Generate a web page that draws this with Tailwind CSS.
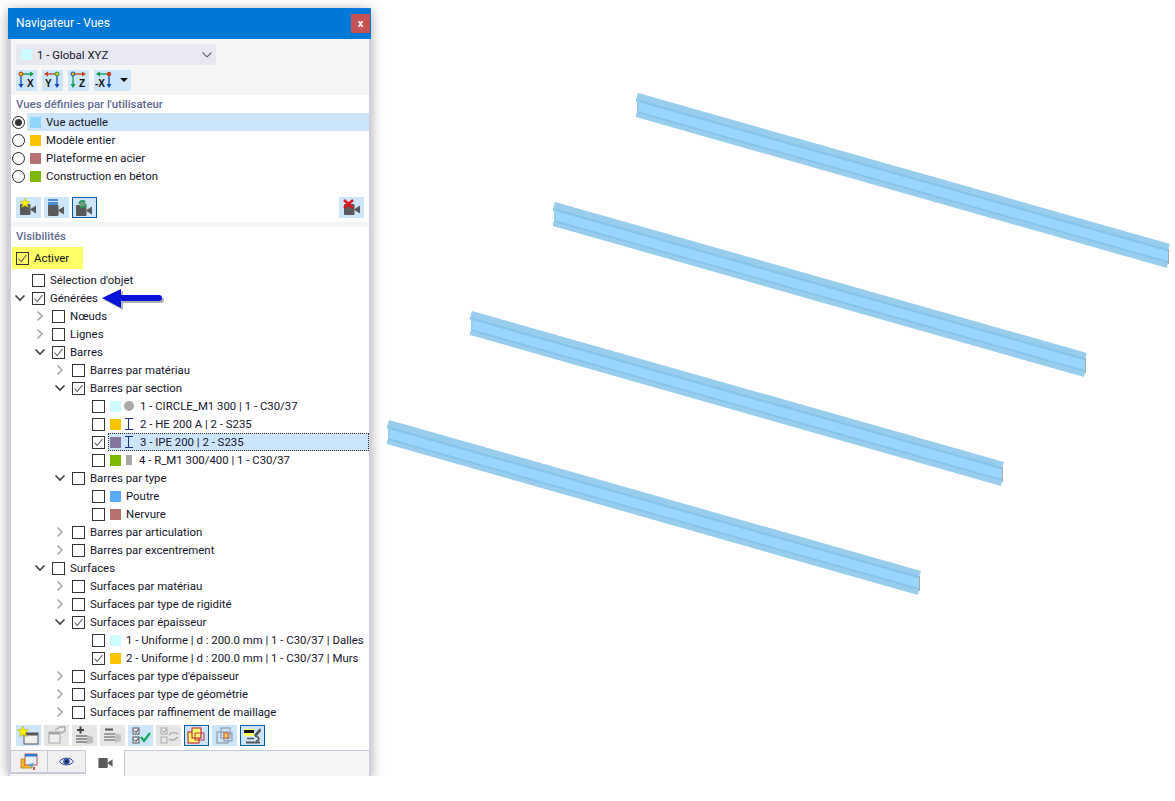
<!DOCTYPE html>
<html lang="fr">
<head>
<meta charset="utf-8">
<title>Navigateur - Vues</title>
<script src="https://cdn.jsdelivr.net/npm/@tailwindcss/browser@4"></script>
</head>
<body class="bg-white">
<svg width="0" height="0" class="absolute">
  <defs>
    <symbol id="ck" viewBox="0 0 13 13"><path d="M2.5 6.5 L5.2 9.5 L10.5 3" fill="none" stroke="#555" stroke-width="1.1"/></symbol>
    <symbol id="open" viewBox="0 0 12 12"><path d="M1.5 3.5 L6 8 L10.5 3.5" fill="none" stroke="#444" stroke-width="1.7"/></symbol>
    <symbol id="closed" viewBox="0 0 12 12"><path d="M3.5 1.5 L8 6 L3.5 10.5" fill="none" stroke="#aaa" stroke-width="1.7"/></symbol>
    <symbol id="ibeam" viewBox="0 0 10 12"><path d="M1 .5 H9 M4.500 .5 V11.500 M1 11.500 H9" fill="none" stroke="#1c2f8f" stroke-width="1"/></symbol>
    <symbol id="cam" viewBox="0 0 16 11"><rect x="0" y="0" width="10.5" height="11" rx="1" fill="#5a5a5a"/><path d="M10.5 5 L16 1.5 V9.5 L10.5 6 Z" fill="#5a5a5a"/></symbol>
    <g id="beam">
      <polygon points="638,93 1170,244 1168,250 636,100" fill="#98cdee"/>
      <polygon points="637,101 1168,251 1168,263 637,113" fill="#9ad6fd"/>
      <polygon points="636,99 1168,249 1168,251.500 636,101.500" fill="#86c4ea"/>
      <polygon points="637,111 1168,261 1168,263.500 637,113.500" fill="#86c4ea"/>
      <polygon points="636,113 1168,263 1167,268 636,117" fill="#98cdee"/>
      <polygon points="637,100 639,101 639,111 637,112" fill="#98cdee"/>
      <polygon points="1168,249 1169,249 1169,264 1168,264" fill="#a8a8a0"/>
    </g>
  </defs>
</svg>

<svg class="absolute left-0 top-0" width="1175" height="801" viewBox="0 0 1175 801">
  <use href="#beam"/>
  <use href="#beam" transform="translate(-83 109)"/>
  <use href="#beam" transform="translate(-166 218)"/>
  <use href="#beam" transform="translate(-249 327)"/>
</svg>

<div class="relative ml-[8px] mt-[8px] w-[363px] h-[768px] shadow-[0_2px_12px_rgba(0,0,0,0.35)] flex flex-col bg-white border-l-[3px] border-r-[2px] border-b-[1px] border-[#d0d0dc] text-[11.4px] leading-[19px] text-[#14142b] [font-family:Roboto,sans-serif]">
  <!-- title -->
  <div class="-ml-[3px] -mr-[2px] h-[31px] shrink-0 bg-[#0078d7] flex items-center justify-between pl-[8px] pr-[1px] text-white text-[12px]">
    <span>Navigateur - Vues</span>
    <span class="w-[19px] h-[19px] bg-[#c75050] flex items-center justify-center text-[11px] font-bold leading-none">x</span>
  </div>

  <!-- top toolbar -->
  <div class="h-[56px] shrink-0 bg-[#f5f5f5] pl-[5px] pt-[5px]">
    <div class="w-[200px] h-[21px] bg-[#e8e8f0] flex items-center pl-[5px]">
      <span class="w-[11px] h-[11px] bg-[#ccfdff] shrink-0"></span>
      <span class="ml-[5px] flex-1 mt-[1px]">1 - Global XYZ</span>
      <svg class="mr-[3px]" width="12" height="12" viewBox="0 0 12 12"><path d="M1.5 3.5 L6 8 L10.5 3.5" fill="none" stroke="#666" stroke-width="1.1"/></svg>
    </div>
    <div class="flex gap-[5px] mt-[5px]">
      <span class="w-[21px] h-[21px] bg-[#cce5f8] block">
        <svg width="21" height="21" viewBox="0 0 21 21"><path d="M5 4 V16" stroke="#1048b8" stroke-width="1.3"/><path d="M2.5 14 H7.5 L5 18 Z" fill="#1048b8"/><path d="M5 4 H15" stroke="#0d9a4c" stroke-width="1.3"/><path d="M14 1.5 V6.5 L18 4 Z" fill="#0d9a4c"/><circle cx="5" cy="4" r="2" fill="#e8c800" stroke="#c8301c"/><text x="11" y="17" font-size="10" font-weight="700" font-family="Liberation Sans" fill="#111">X</text></svg>
      </span>
      <span class="w-[21px] h-[21px] bg-[#cce5f8] block">
        <svg width="21" height="21" viewBox="0 0 21 21"><path d="M15 4 V16" stroke="#1048b8" stroke-width="1.3"/><path d="M12.500 14 H17.500 L15 18 Z" fill="#1048b8"/><path d="M5 4 H15" stroke="#c8401c" stroke-width="1.3"/><path d="M6 1.500 V6.500 L2 4 Z" fill="#c8401c"/><circle cx="15" cy="4" r="2" fill="#e8c800" stroke="#0d9a4c"/><text x="3" y="17" font-size="10" font-weight="700" font-family="Liberation Sans" fill="#111">Y</text></svg>
      </span>
      <span class="w-[21px] h-[21px] bg-[#cce5f8] block">
        <svg width="21" height="21" viewBox="0 0 21 21"><path d="M5 4 V16" stroke="#0d9a4c" stroke-width="1.3"/><path d="M2.500 14 H7.500 L5 18 Z" fill="#0d9a4c"/><path d="M5 4 H15" stroke="#c8401c" stroke-width="1.3"/><path d="M14 1.500 V6.500 L18 4 Z" fill="#c8401c"/><circle cx="5" cy="4" r="2" fill="#e8c800" stroke="#1048b8"/><text x="11" y="17" font-size="10" font-weight="700" font-family="Liberation Sans" fill="#111">Z</text></svg>
      </span>
      <span class="w-[37px] h-[21px] bg-[#cce5f8] block">
        <svg width="37" height="21" viewBox="0 0 37 21"><path d="M15 4 V16" stroke="#1048b8" stroke-width="1.3"/><path d="M12.500 14 H17.500 L15 18 Z" fill="#1048b8"/><path d="M5 4 H15" stroke="#0d9a4c" stroke-width="1.3"/><path d="M6 1.500 V6.500 L2 4 Z" fill="#0d9a4c"/><circle cx="15" cy="4" r="2.200" fill="#c8401c"/><text x="1" y="17" font-size="10" font-weight="700" font-family="Liberation Sans" fill="#111">-X</text><path d="M26 8 H34 L30 12 Z" fill="#111"/></svg>
      </span>
    </div>
  </div>

  <div class="shrink-0 h-[18px] pl-[5px] flex items-center font-medium text-[#5f6b91]">Vues définies par l'utilisateur</div>

  <!-- view list -->
  <div class="shrink-0 flex items-center h-[18px]">
    <span class="ml-[1px] w-[13px] h-[13px] rounded-full border border-[#222] flex items-center justify-center"><span class="w-[7px] h-[7px] rounded-full bg-[#333]"></span></span>
    <span class="ml-[2px] flex-1 h-full bg-[#cce5fb] flex items-center pl-[3px]"><span class="w-[11px] h-[11px] bg-[#90d6f8]"></span><span class="ml-[5px]">Vue actuelle</span></span>
  </div>
  <div class="shrink-0 flex items-center h-[18px]">
    <span class="ml-[1px] w-[13px] h-[13px] rounded-full border border-[#222]"></span>
    <span class="ml-[2px] flex-1 h-full flex items-center pl-[3px]"><span class="w-[11px] h-[11px] bg-[#f8c500]"></span><span class="ml-[5px]">Modèle entier</span></span>
  </div>
  <div class="shrink-0 flex items-center h-[18px]">
    <span class="ml-[1px] w-[13px] h-[13px] rounded-full border border-[#222]"></span>
    <span class="ml-[2px] flex-1 h-full flex items-center pl-[3px]"><span class="w-[11px] h-[11px] bg-[#b87070]"></span><span class="ml-[5px]">Plateforme en acier</span></span>
  </div>
  <div class="shrink-0 flex items-center h-[18px]">
    <span class="ml-[1px] w-[13px] h-[13px] rounded-full border border-[#222]"></span>
    <span class="ml-[2px] flex-1 h-full flex items-center pl-[3px]"><span class="w-[11px] h-[11px] bg-[#7db900]"></span><span class="ml-[5px]">Construction en béton</span></span>
  </div>

  <!-- camera toolbar -->
  <div class="shrink-0 flex gap-[3px] pl-[5px] pr-[5px] mt-[12px] h-[21px]">
    <span class="relative w-[25px] h-[21px] bg-[#cce5f8] block">
      <svg class="absolute left-[4px] top-[7px]" width="16" height="11"><use href="#cam"/></svg>
      <svg class="absolute left-[4px] top-[1px]" width="10" height="10" viewBox="0 0 12 12"><path d="M6 0 L7.500 4 L12 4.500 L8.500 7 L10 11.500 L6 9 L2 11.500 L3.500 7 L0 4.500 L4.500 4 Z" fill="#f5f000" stroke="#b8a000" stroke-width=".5"/></svg>
    </span>
    <span class="relative w-[25px] h-[21px] bg-[#cce5f8] block">
      <svg class="absolute left-[4px] top-[8px]" width="16" height="11"><use href="#cam"/></svg>
      <span class="absolute left-[4px] top-[2px] w-[10px] h-[2px] bg-[#4f8fd0]"></span>
      <span class="absolute left-[4px] top-[5px] w-[10px] h-[3px] bg-[#4f8fd0]"></span>
    </span>
    <span class="relative w-[25px] h-[21px] bg-[#cce5f8] border border-[#005a9e] block">
      <svg class="absolute left-[3px] top-[7px]" width="16" height="11"><use href="#cam"/></svg>
      <svg class="absolute left-[4px] top-[1px]" width="11" height="10" viewBox="0 0 12 11"><circle cx="6" cy="5.500" r="3.500" fill="#7f9a8a" stroke="#1f9a58" stroke-width="2" stroke-dasharray="8 3"/></svg>
    </span>
    <span class="flex-1"></span>
    <span class="relative w-[25px] h-[21px] bg-[#cce5f8] block">
      <svg class="absolute left-[5px] top-[7px]" width="16" height="11"><use href="#cam"/></svg>
      <svg class="absolute left-[4px] top-[2px]" width="11" height="10" viewBox="0 0 11 10"><path d="M1 1 L10 9 M10 1 L1 9" stroke="#e0141c" stroke-width="2.400"/></svg>
    </span>
  </div>

  <div class="shrink-0 h-[5px] mt-[4px] bg-[#f5f5f5]"></div>

  <div class="shrink-0 h-[18px] pl-[5px] flex items-center font-medium text-[#5f6b91]">Visibilités</div>

  <!-- Activer -->
  <div class="shrink-0 mt-[2px] ml-[1px] w-[71px] h-[22px] bg-[#ffff66] flex items-center pl-[4px]">
    <span class="w-[13px] h-[13px] border border-[#333] block"><svg class="-m-px" width="13" height="13"><use href="#ck"/></svg></span>
    <span class="ml-[5px]">Activer</span>
  </div>

  <!-- tree -->
  <div class="shrink-0 mt-[2px] flex flex-col relative">
    <div class="h-[18px] flex items-center pl-[21px]"><span class="w-[13px] h-[13px] border border-[#333]"></span><span class="ml-[5px]">Sélection d'objet</span></div>
    <div class="h-[18px] flex items-center pl-[3px]"><svg class="mr-[6px]" width="12" height="12"><use href="#open"/></svg><span class="w-[13px] h-[13px] border border-[#333] block"><svg class="-m-px" width="13" height="13"><use href="#ck"/></svg></span><span class="ml-[5px]">Générées</span></div>
    <div class="h-[18px] flex items-center pl-[23px]"><svg class="mr-[6px]" width="12" height="12"><use href="#closed"/></svg><span class="w-[13px] h-[13px] border border-[#333]"></span><span class="ml-[5px]">Nœuds</span></div>
    <div class="h-[18px] flex items-center pl-[23px]"><svg class="mr-[6px]" width="12" height="12"><use href="#closed"/></svg><span class="w-[13px] h-[13px] border border-[#333]"></span><span class="ml-[5px]">Lignes</span></div>
    <div class="h-[18px] flex items-center pl-[23px]"><svg class="mr-[6px]" width="12" height="12"><use href="#open"/></svg><span class="w-[13px] h-[13px] border border-[#333] block"><svg class="-m-px" width="13" height="13"><use href="#ck"/></svg></span><span class="ml-[5px]">Barres</span></div>
    <div class="h-[18px] flex items-center pl-[43px]"><svg class="mr-[6px]" width="12" height="12"><use href="#closed"/></svg><span class="w-[13px] h-[13px] border border-[#333]"></span><span class="ml-[5px]">Barres par matériau</span></div>
    <div class="h-[18px] flex items-center pl-[43px]"><svg class="mr-[6px]" width="12" height="12"><use href="#open"/></svg><span class="w-[13px] h-[13px] border border-[#333] block"><svg class="-m-px" width="13" height="13"><use href="#ck"/></svg></span><span class="ml-[5px]">Barres par section</span></div>
    <div class="h-[18px] flex items-center pl-[81px]"><span class="w-[13px] h-[13px] border border-[#333]"></span><span class="ml-[5px] w-[11px] h-[11px] bg-[#ccfdff]"></span><span class="ml-[3px] w-[10px] h-[10px] rounded-full bg-[#a8a8a8]"></span><span class="ml-[6px]">1 - CIRCLE_M1 300 | 1 - C30/37</span></div>
    <div class="h-[18px] flex items-center pl-[81px]"><span class="w-[13px] h-[13px] border border-[#333]"></span><span class="ml-[5px] w-[11px] h-[11px] bg-[#f8c500]"></span><svg class="ml-[3px] mr-[6px]" width="10" height="12"><use href="#ibeam"/></svg><span>2 - HE 200 A | 2 - S235</span></div>
    <div class="h-[18px] flex items-center pl-[81px]"><span class="w-[13px] h-[13px] border border-[#333] block"><svg class="-m-px" width="13" height="13"><use href="#ck"/></svg></span><span class="ml-[3px] flex-1 h-full flex items-center pl-[1px] bg-[#cce5fb] border border-dotted border-[#333]"><span class="w-[11px] h-[11px] bg-[#85759a]"></span><svg class="ml-[3px] mr-[6px]" width="10" height="12"><use href="#ibeam"/></svg><span>3 - IPE 200 | 2 - S235</span></span></div>
    <div class="h-[18px] flex items-center pl-[81px]"><span class="w-[13px] h-[13px] border border-[#333]"></span><span class="ml-[5px] w-[11px] h-[11px] bg-[#7db900]"></span><span class="ml-[5px] w-[6px] h-[10px] bg-[#a8a8a8]"></span><span class="ml-[7px]">4 - R_M1 300/400 | 1 - C30/37</span></div>
    <div class="h-[18px] flex items-center pl-[43px]"><svg class="mr-[6px]" width="12" height="12"><use href="#open"/></svg><span class="w-[13px] h-[13px] border border-[#333]"></span><span class="ml-[5px]">Barres par type</span></div>
    <div class="h-[18px] flex items-center pl-[81px]"><span class="w-[13px] h-[13px] border border-[#333]"></span><span class="ml-[5px] w-[11px] h-[11px] bg-[#5aa9f5]"></span><span class="ml-[5px]">Poutre</span></div>
    <div class="h-[18px] flex items-center pl-[81px]"><span class="w-[13px] h-[13px] border border-[#333]"></span><span class="ml-[5px] w-[11px] h-[11px] bg-[#b87070]"></span><span class="ml-[5px]">Nervure</span></div>
    <div class="h-[18px] flex items-center pl-[43px]"><svg class="mr-[6px]" width="12" height="12"><use href="#closed"/></svg><span class="w-[13px] h-[13px] border border-[#333]"></span><span class="ml-[5px]">Barres par articulation</span></div>
    <div class="h-[18px] flex items-center pl-[43px]"><svg class="mr-[6px]" width="12" height="12"><use href="#closed"/></svg><span class="w-[13px] h-[13px] border border-[#333]"></span><span class="ml-[5px]">Barres par excentrement</span></div>
    <div class="h-[18px] flex items-center pl-[23px]"><svg class="mr-[6px]" width="12" height="12"><use href="#open"/></svg><span class="w-[13px] h-[13px] border border-[#333]"></span><span class="ml-[5px]">Surfaces</span></div>
    <div class="h-[18px] flex items-center pl-[43px]"><svg class="mr-[6px]" width="12" height="12"><use href="#closed"/></svg><span class="w-[13px] h-[13px] border border-[#333]"></span><span class="ml-[5px]">Surfaces par matériau</span></div>
    <div class="h-[18px] flex items-center pl-[43px]"><svg class="mr-[6px]" width="12" height="12"><use href="#closed"/></svg><span class="w-[13px] h-[13px] border border-[#333]"></span><span class="ml-[5px]">Surfaces par type de rigidité</span></div>
    <div class="h-[18px] flex items-center pl-[43px]"><svg class="mr-[6px]" width="12" height="12"><use href="#open"/></svg><span class="w-[13px] h-[13px] border border-[#333] block"><svg class="-m-px" width="13" height="13"><use href="#ck"/></svg></span><span class="ml-[5px]">Surfaces par épaisseur</span></div>
    <div class="h-[18px] flex items-center pl-[81px]"><span class="w-[13px] h-[13px] border border-[#333] shrink-0"></span><span class="ml-[5px] w-[11px] h-[11px] bg-[#ccfdff] shrink-0"></span><span class="ml-[5px] whitespace-nowrap">1 - Uniforme | d : 200.0 mm | 1 - C30/37 | Dalles</span></div>
    <div class="h-[18px] flex items-center pl-[81px]"><span class="w-[13px] h-[13px] border border-[#333] block shrink-0"><svg class="-m-px" width="13" height="13"><use href="#ck"/></svg></span><span class="ml-[5px] w-[11px] h-[11px] bg-[#f8c500] shrink-0"></span><span class="ml-[5px] whitespace-nowrap">2 - Uniforme | d : 200.0 mm | 1 - C30/37 | Murs</span></div>
    <div class="h-[18px] flex items-center pl-[43px]"><svg class="mr-[6px]" width="12" height="12"><use href="#closed"/></svg><span class="w-[13px] h-[13px] border border-[#333]"></span><span class="ml-[5px]">Surfaces par type d'épaisseur</span></div>
    <div class="h-[18px] flex items-center pl-[43px]"><svg class="mr-[6px]" width="12" height="12"><use href="#closed"/></svg><span class="w-[13px] h-[13px] border border-[#333]"></span><span class="ml-[5px]">Surfaces par type de géométrie</span></div>
    <div class="h-[18px] flex items-center pl-[43px]"><svg class="mr-[6px]" width="12" height="12"><use href="#closed"/></svg><span class="w-[13px] h-[13px] border border-[#333]"></span><span class="ml-[5px]">Surfaces par raffinement de maillage</span></div>
  </div>

  <!-- bottom toolbar -->
  <div class="shrink-0 mt-[4px] h-[21px] pl-[5px] flex gap-[3px]">
    <span class="block w-[25px] h-[21px] bg-[#cce5f8]"><svg width="25" height="21" viewBox="0 0 25 21"><rect x="8" y="8" width="14" height="11" fill="#f0f0f0" stroke="#555"/><rect x="8" y="8" width="14" height="2.500" fill="#555"/><path d="M7 1 L8.500 4.500 L12.500 5 L9.500 7.500 L10.500 11.500 L7 9.500 L3.500 11.500 L4.500 7.500 L1.500 5 L5.500 4.500 Z" fill="#f5f000" stroke="#b8a000" stroke-width=".5"/></svg></span>
    <span class="block w-[25px] h-[21px] bg-[#e6e6e6]"><svg width="25" height="21" viewBox="0 0 25 21"><rect x="5" y="7" width="11" height="11" fill="#efefef" stroke="#a8a8a8"/><rect x="5" y="7" width="11" height="2.500" fill="#a8a8a8"/><path d="M11 5 L16 2 H21 V6 L17 8" fill="none" stroke="#a8a8a8" stroke-width="1.400"/></svg></span>
    <span class="block w-[25px] h-[21px] bg-[#e6e6e6]"><svg width="25" height="21" viewBox="0 0 25 21"><path d="M5 5 H12 M8.500 1.500 V8.500" stroke="#444" stroke-width="2"/><path d="M4 11 H15 M4 14 H15 M4 17 H15" stroke="#777" stroke-width="1.500"/><path d="M15 10 L21 12 V18 L15 19 Z" fill="#bbb"/></svg></span>
    <span class="block w-[25px] h-[21px] bg-[#e6e6e6]"><svg width="25" height="21" viewBox="0 0 25 21"><path d="M5 4.500 H13" stroke="#555" stroke-width="2"/><path d="M4 9 H15 M4 12 H15 M4 15 H15" stroke="#888" stroke-width="1.500"/><path d="M15 8 L21 10 V16 L15 18 Z" fill="#c4c4c4"/></svg></span>
    <span class="block w-[25px] h-[21px] bg-[#cce5f8]"><svg width="25" height="21" viewBox="0 0 25 21"><rect x="5" y="3" width="6" height="6" fill="#eef" stroke="#555"/><path d="M6 5.500 L8 7.500 L10.500 4" fill="none" stroke="#333"/><rect x="5" y="12" width="6" height="6" fill="#eef" stroke="#555"/><path d="M6 14.500 L8 16.500 L10.500 13" fill="none" stroke="#333"/><path d="M13 12 L16 16 L22 8" fill="none" stroke="#10a858" stroke-width="2.200"/></svg></span>
    <span class="block w-[25px] h-[21px] bg-[#e6e6e6]"><svg width="25" height="21" viewBox="0 0 25 21"><rect x="5" y="3" width="6" height="6" fill="none" stroke="#aaa"/><path d="M6 5.500 L8 7.500 L10.500 4" fill="none" stroke="#999"/><rect x="5" y="12" width="6" height="6" fill="none" stroke="#aaa"/><path d="M13 10 C15 7 19 7 22 9 M13 14 C16 16 19 15 22 12" fill="none" stroke="#aaa" stroke-width="1.400"/></svg></span>
    <span class="block w-[25px] h-[21px] bg-[#cce5f8] border border-[#005a9e]"><svg width="23" height="19" viewBox="0 0 23 19"><rect x="3" y="6" width="11" height="11" fill="#ffff70" stroke="#c8303c" stroke-width="1.200"/><rect x="7" y="2" width="9" height="10" fill="#ffff70" stroke="#c8303c" stroke-width="1.200"/><rect x="10" y="7" width="9" height="7" fill="none" stroke="#c8303c" stroke-width="1"/></svg></span>
    <span class="block w-[25px] h-[21px] bg-[#cce5f8]"><svg width="25" height="21" viewBox="0 0 25 21"><rect x="5" y="7" width="11" height="11" fill="none" stroke="#8c9cae" stroke-width="1.200"/><rect x="9" y="3" width="9" height="10" fill="none" stroke="#8c9cae" stroke-width="1.200"/><rect x="12" y="8" width="8" height="8" fill="none" stroke="#8c9cae" stroke-width="1.200"/><rect x="12" y="8" width="4" height="5" fill="#f8d050" stroke="#e06040"/></svg></span>
    <span class="block w-[25px] h-[21px] bg-[#cce5f8] border border-[#005a9e]"><svg width="23" height="19" viewBox="0 0 23 19"><rect x="3" y="3" width="10" height="7" fill="#ffff60"/><rect x="3" y="4" width="10" height="3" fill="#111"/><path d="M19 2 L13 9 L15 11 L20 5 Z" fill="#555"/><path d="M14 10 C19 11 19 15 15 15" fill="none" stroke="#555" stroke-width="1.600"/><path d="M5 16.500 H19" stroke="#555" stroke-width="2"/><path d="M6 12.500 H13" stroke="#555" stroke-width="1.500"/></svg></span>
  </div>

  <!-- tabs -->
  <div class="flex-1 mt-[4px] -mb-[1px] -ml-[1px] flex bg-[#f5f5f5] border-t border-[#c8c8d8]">
    <span class="w-[38px] bg-[#f0f0f0] border-x border-b-2 border-[#c8c8d8] mb-[2px] flex items-center justify-center">
      <svg width="18" height="18" viewBox="0 0 18 18"><path d="M1 6 H6 L7 8 H12 V15 H1 Z" fill="#f0b830" stroke="#b8860b" stroke-width=".8"/><rect x="5" y="1" width="12" height="11" fill="#e8f0fa" stroke="#c03030" stroke-width=".8"/><rect x="5" y="1" width="12" height="2.500" fill="#2878d0"/><path d="M8 11 L14 10 L12 15" fill="#60a0d8"/><path d="M14 14 V17" stroke="#d02020" stroke-width="1.500"/></svg>
    </span>
    <span class="w-[38px] bg-[#f0f0f0] border-r border-b-2 border-[#c8c8d8] mb-[2px] flex items-center justify-center">
      <svg width="15" height="11" viewBox="0 0 15 11"><path d="M.5 5.500 C3 1 12 1 14.500 5.500 C12 10 3 10 .5 5.500 Z" fill="#dfe6f2" stroke="#3b4a8c"/><circle cx="7.500" cy="5.500" r="3.200" fill="#2f56b0"/><circle cx="7.500" cy="5.500" r="1.300" fill="#111"/></svg>
    </span>
    <span class="w-[39px] -mt-px bg-white border-r border-[#c8c8d8] flex items-center justify-center pl-[1px]">
      <svg width="15" height="10" viewBox="0 0 16 11"><use href="#cam"/></svg>
    </span>
  </div>
</div>

<!-- arrow -->
<svg class="absolute left-[98px] top-[284px]" width="72" height="30" viewBox="0 0 72 30">
  <path d="M4 14 L23 5 V11 H61 A3 3 0 0 1 61 17 H23 V24 Z" fill="#000" opacity=".3" transform="translate(2 2)"/>
  <path d="M4 14 L23 5 V11 H61 A3 3 0 0 1 61 17 H23 V24 Z" fill="#0a14d8"/>
</svg>
</body>
</html>
